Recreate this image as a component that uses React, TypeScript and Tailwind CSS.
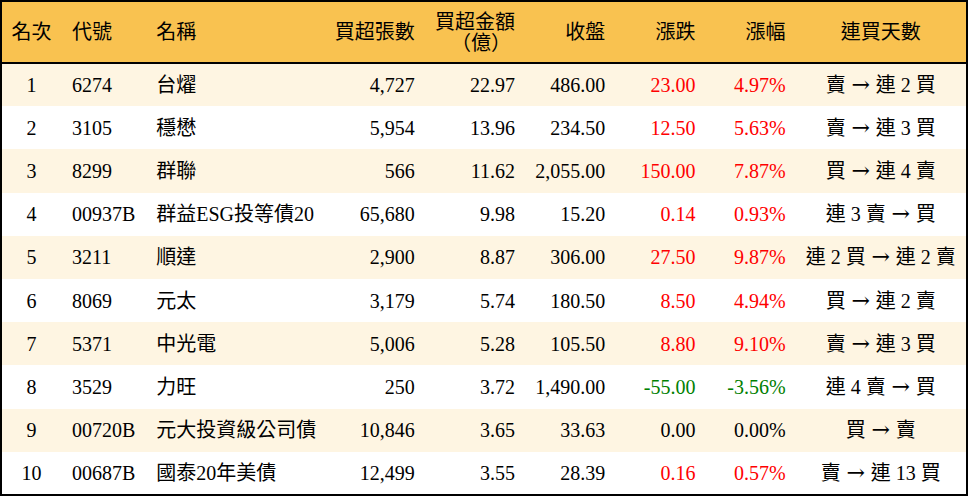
import React from 'react';

type Row = {
  rank: number;
  code: string;
  name: string;
  lots: string;
  amount: string;
  close: string;
  change: string;
  pct: string;
  streak: string[];
};

const rows: Row[] = [
  { rank: 1, code: '6274', name: '台燿', lots: '4,727', amount: '22.97', close: '486.00', change: '23.00', pct: '4.97%', streak: ['賣', '連 2 買'] },
  { rank: 2, code: '3105', name: '穩懋', lots: '5,954', amount: '13.96', close: '234.50', change: '12.50', pct: '5.63%', streak: ['賣', '連 3 買'] },
  { rank: 3, code: '8299', name: '群聯', lots: '566', amount: '11.62', close: '2,055.00', change: '150.00', pct: '7.87%', streak: ['買', '連 4 賣'] },
  { rank: 4, code: '00937B', name: '群益ESG投等債20', lots: '65,680', amount: '9.98', close: '15.20', change: '0.14', pct: '0.93%', streak: ['連 3 賣', '買'] },
  { rank: 5, code: '3211', name: '順達', lots: '2,900', amount: '8.87', close: '306.00', change: '27.50', pct: '9.87%', streak: ['連 2 買', '連 2 賣'] },
  { rank: 6, code: '8069', name: '元太', lots: '3,179', amount: '5.74', close: '180.50', change: '8.50', pct: '4.94%', streak: ['買', '連 2 賣'] },
  { rank: 7, code: '5371', name: '中光電', lots: '5,006', amount: '5.28', close: '105.50', change: '8.80', pct: '9.10%', streak: ['賣', '連 3 買'] },
  { rank: 8, code: '3529', name: '力旺', lots: '250', amount: '3.72', close: '1,490.00', change: '-55.00', pct: '-3.56%', streak: ['連 4 賣', '買'] },
  { rank: 9, code: '00720B', name: '元大投資級公司債', lots: '10,846', amount: '3.65', close: '33.63', change: '0.00', pct: '0.00%', streak: ['買', '賣'] },
  { rank: 10, code: '00687B', name: '國泰20年美債', lots: '12,499', amount: '3.55', close: '28.39', change: '0.16', pct: '0.57%', streak: ['賣', '連 13 買'] },
];

// 漲跌顏色
const tone = (v: string) => {
  if (v.startsWith('-')) return 'text-[#008000]';
  if (parseFloat(v) === 0) return 'text-black';
  return 'text-[#ff0000]';
};

export default function App() {
  return (
    <div className="w-[968px] h-[496px] bg-white font-['Liberation_Serif','Noto_Sans_CJK_TC',serif] text-[20px] text-black">
      <table className="w-[968px] table-fixed border-collapse border-2 border-black">
        <colgroup>
          <col className="w-[60px]" />
          <col className="w-[83px]" />
          <col className="w-[180px]" />
          <col className="w-[100px]" />
          <col className="w-[100px]" />
          <col className="w-[90px]" />
          <col className="w-[90px]" />
          <col className="w-[90px]" />
          <col className="w-[171px]" />
        </colgroup>
        <thead>
          <tr className="h-[62px] bg-[#f9c250] border-b-2 border-black">
            <th className="font-normal text-center">名次</th>
            <th className="font-normal text-left pl-[11px]">代號</th>
            <th className="font-normal text-left pl-[12px]">名稱</th>
            <th className="font-normal text-right pr-[10px]">買超張數</th>
            <th className="font-normal text-right pr-[10px] pt-[2px]">
              <div className="h-[21px] leading-[21px]">買超金額</div>
              <div className="h-[21px] leading-[21px] pr-[4px]">（億）</div>
            </th>
            <th className="font-normal text-right pr-[10px]">收盤</th>
            <th className="font-normal text-right pr-[10px]">漲跌</th>
            <th className="font-normal text-right pr-[10px]">漲幅</th>
            <th className="font-normal text-center">連買天數</th>
          </tr>
        </thead>
        <tbody>
          {rows.map((r, i) => (
            <tr key={r.rank} className={i % 2 === 0 ? 'h-[43.2px] bg-[#fef5e2]' : 'h-[43.2px] bg-white'}>
              <td className="text-center">{r.rank}</td>
              <td className="text-left pl-[11px]">{r.code}</td>
              <td className="text-left pl-[12px] whitespace-nowrap">{r.name}</td>
              <td className="text-right pr-[10px]">{r.lots}</td>
              <td className="text-right pr-[10px]">{r.amount}</td>
              <td className="text-right pr-[10px]">{r.close}</td>
              <td className={`text-right pr-[10px] ${tone(r.change)}`}>{r.change}</td>
              <td className={`text-right pr-[10px] ${tone(r.pct)}`}>{r.pct}</td>
              <td className="text-center whitespace-nowrap">
                {r.streak[0]}
                <span className="inline-block w-[30px] text-center leading-none font-['DejaVu_Serif',serif] text-[22px]">→</span>
                {r.streak[1]}
              </td>
            </tr>
          ))}
        </tbody>
      </table>
    </div>
  );
}
